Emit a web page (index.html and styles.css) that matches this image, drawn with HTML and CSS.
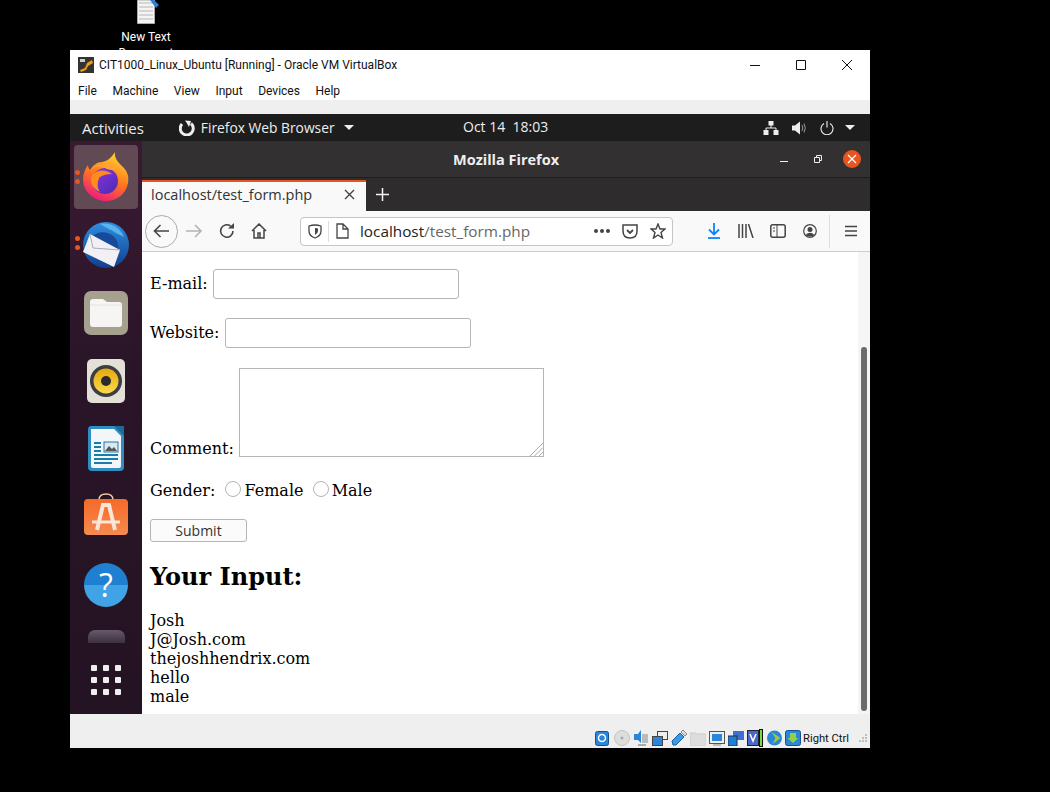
FILE: index.html
```html
<!DOCTYPE html>
<html lang="en">
<head>
  <meta charset="UTF-8">
  <title>CIT1000_Linux_Ubuntu [Running] - Oracle VM VirtualBox</title>
  <link rel="stylesheet" href="styles.css">
</head>
<body>
  <div class="desk-icon">
    <svg width="26" height="25" viewBox="0 0 26 25">
      <path d="M4.5 0H21.5V23.5H4.5Z" fill="#f4f4f4" stroke="#aaa"/>
      <path d="M6 3H20M6 7H20M6 11H20M6 15H20M6 19H20" stroke="#b5b5b5"/>
      <path d="M17 0H21L26 5L23 8Z" fill="#2a7fd0"/>
    </svg>
    <div class="desk-label">New Text<br>Document</div>
  </div>

  <div class="vbox">
    <div class="vbox-title">
      <svg class="vbox-logo" width="16" height="16" viewBox="0 0 16 16">
        <rect width="16" height="16" fill="#333"/>
        <path d="M2 13L7 11L9 6L14 3L15 6L10 9L8 13L3 15Z" fill="#f09a1a"/>
        <rect x="2" y="2" width="5" height="3" fill="#ccc"/>
      </svg>
      <span class="vbox-name">CIT1000_Linux_Ubuntu [Running] - Oracle VM VirtualBox</span>
      <div class="win-btns">
        <svg width="12" height="12" viewBox="0 0 12 12"><path d="M1 6.5H11" stroke="#111"/></svg>
        <svg width="12" height="12" viewBox="0 0 12 12"><path d="M1.5 1.5H10.5V10.5H1.5Z" fill="none" stroke="#111"/></svg>
        <svg width="12" height="12" viewBox="0 0 12 12"><path d="M1 1L11 11M11 1L1 11" stroke="#111"/></svg>
      </div>
    </div>
    <div class="vbox-menu">
      <span>File</span><span>Machine</span><span>View</span><span>Input</span><span>Devices</span><span>Help</span>
    </div>
    <div class="vbox-gap"></div>

    <div class="guest">
      <div class="topbar">
        <span class="activities">Activities</span>
        <div class="app-menu">
          <svg width="16" height="16" viewBox="0 0 16 16"><path d="M3 4A6.5 6.5 0 1 0 12 3.5" fill="none" stroke="#eee" stroke-width="3"/><path d="M6 0.5L12 1L10 7Q8 3 6 0.5Z" fill="#eee"/></svg>
          <span>Firefox Web Browser</span>
          <i class="caret"></i>
        </div>
        <span class="clock">Oct 14&nbsp; 18:03</span>
        <div class="tray">
          <svg width="16" height="14" viewBox="0 0 16 14"><path d="M5.5 0H10.5V4.5H5.5ZM0.5 9H5.5V14H0.5ZM10.5 9H15.5V14H10.5Z" fill="#eee"/><path d="M8 4V7M3 10V7H13V10" fill="none" stroke="#eee"/></svg>
          <svg width="15" height="14" viewBox="0 0 15 14"><path d="M0 4.5H3L8 0.5V13.5L3 9.5H0Z" fill="#eee"/><path d="M10 4Q11.5 7 10 10M12 2.5Q14.5 7 12 11.5" fill="none" stroke="#999"/></svg>
          <svg width="14" height="14" viewBox="0 0 14 14"><path d="M4 2.5A6 6 0 1 0 10 2.5M7 0V6.5" fill="none" stroke="#eee" stroke-width="1.1"/></svg>
          <i class="caret"></i>
        </div>
      </div>

      <div class="guest-main">
        <div class="dock">
          <div class="dock-item active">
            <i class="pip one"></i><i class="pip two"></i>
            <svg width="48" height="50" viewBox="0 0 48 50">
              <defs>
                <linearGradient id="fx" x1="0.7" y1="0" x2="0.3" y2="1"><stop offset="0" stop-color="#ffd535"/><stop offset="0.5" stop-color="#ff7a1c"/><stop offset="1" stop-color="#f0177f"/></linearGradient>
                <linearGradient id="fxp" x1="0" y1="0" x2="1" y2="1"><stop offset="0" stop-color="#8f35e0"/><stop offset="1" stop-color="#4a2bb0"/></linearGradient>
              </defs>
              <path d="M33 0C32 6 36 10 41 15C46 20 47 25 46 31C44 42 35 49 24 49C11 49 1 39 1 27C1 22 3 17 6 13C6 15 7 17 8 18C11 13 15 10 20 10C26 9 30 5 33 0Z" fill="url(#fx)"/>
              <circle cx="23" cy="29" r="13" fill="url(#fxp)"/>
              <path d="M8 18C12 14 18 13 23 16C28 19 33 17 35 18C32 14 27 11 21 12C15 13 11 14 8 18Z" fill="#ffa42c"/>
              <path d="M9 25C14 17 24 17 30 22C25 22 21 23 18 25C16 27 14 35 18 40C11 37 8 31 9 25Z" fill="#ff8a1e"/>
            </svg>
          </div>
          <div class="dock-item">
            <i class="pip one"></i><i class="pip two"></i>
            <svg width="48" height="48" viewBox="0 0 48 48">
              <defs><linearGradient id="tb" x1="0.5" y1="0" x2="0.5" y2="1"><stop offset="0" stop-color="#2e8fe0"/><stop offset="1" stop-color="#123e8c"/></linearGradient></defs>
              <circle cx="24" cy="24" r="23" fill="url(#tb)"/>
              <path d="M6 22C10 12 20 8 30 14C36 18 38 26 34 34L10 28Z" fill="#174a98"/>
              <path d="M8 13L38 29L32 46L1 31Z" fill="#f1f1f5"/>
              <path d="M8 13L11 27L38 29" fill="none" stroke="#aab" stroke-width="1"/>
              <path d="M18 3C26 1 38 5 42 16L34 12C28 8 22 6 18 3Z" fill="#58b3ee"/>
            </svg>
          </div>
          <div class="dock-item">
            <svg width="44" height="44" viewBox="0 0 44 44">
              <rect width="44" height="44" rx="7" fill="#a6a08e"/>
              <path d="M6 11Q6 8 9 8H19L23 11H35Q38 11 38 14V33Q38 36 35 36H9Q6 36 6 33Z" fill="#f6f5f3"/>
              <path d="M6 14H38" stroke="#e4e2de"/>
            </svg>
          </div>
          <div class="dock-item">
            <svg width="38" height="44" viewBox="0 0 38 44">
              <defs><linearGradient id="rb" x1="0" y1="0" x2="0" y2="1"><stop offset="0" stop-color="#e5a90d"/><stop offset="1" stop-color="#f8da4e"/></linearGradient></defs>
              <rect width="38" height="44" rx="5" fill="#e3e0d8"/>
              <circle cx="19" cy="22" r="16" fill="#3d3d42"/>
              <circle cx="19" cy="22" r="12.5" fill="url(#rb)"/>
              <circle cx="19" cy="22" r="5" fill="#2b2b2b"/>
            </svg>
          </div>
          <div class="dock-item">
            <svg width="38" height="46" viewBox="0 0 38 46">
              <path d="M4 0H28L37 9V41Q37 45 33 45H5Q1 45 1 41V4Q1 0 4 0Z" fill="#2f8dbf"/>
              <path d="M4 3H27L34 10V40Q34 42 32 42H6Q4 42 4 40Z" fill="#f3f6f8"/>
              <path d="M27 0L37 0V10Z" fill="#1b6d98"/>
              <path d="M7 17H14M7 21H14M7 25H14M7 29H31M7 33H31M7 37H25" stroke="#1a7bad" stroke-width="2"/>
              <rect x="17" y="16" width="14" height="10" fill="#dfe7ee" stroke="#1a7bad"/>
              <path d="M18 25L22 20L25 23L27 21L30 25Z" fill="#555"/>
            </svg>
          </div>
          <div class="dock-item">
            <svg class="bag" width="44" height="42" viewBox="0 0 44 42">
              <defs><linearGradient id="sw" x1="0" y1="0" x2="0" y2="1"><stop offset="0" stop-color="#f56a28"/><stop offset="1" stop-color="#f58a50"/></linearGradient></defs>
              <path d="M15 7Q15 1 22 1Q29 1 29 7" fill="none" stroke="#f1c9a8" stroke-width="1.5"/>
              <rect y="6" width="44" height="36" rx="4" fill="url(#sw)"/>
              <path d="M13 37L19 12H25L31 37" fill="none" stroke="#fbe5d8" stroke-width="4"/>
              <path d="M8 29H36" stroke="#fbe5d8" stroke-width="3"/>
            </svg>
          </div>
          <div class="dock-item">
            <div class="help-ball">?</div>
          </div>
          <div class="dock-clip"></div>
          <div class="dock-grid">
            <i></i><i></i><i></i><i></i><i></i><i></i><i></i><i></i><i></i>
          </div>
        </div>

        <div class="firefox">
          <div class="fx-title">
            <b>Mozilla Firefox</b>
            <div class="fx-btns">
              <svg width="10" height="10" viewBox="0 0 10 10"><path d="M1 7.5H9" stroke="#eee"/></svg>
              <svg width="10" height="10" viewBox="0 0 10 10"><path d="M1.5 3.5H6.5V8.5H1.5ZM3.5 3V1.5H8.5V6.5H7" fill="none" stroke="#eee"/></svg>
              <span class="fx-close"><svg width="10" height="10" viewBox="0 0 10 10"><path d="M1 1L9 9M9 1L1 9" stroke="#fff" stroke-width="1.3"/></svg></span>
            </div>
          </div>
          <div class="fx-tabs">
            <div class="tab">
              <span>localhost/test_form.php</span>
              <svg width="11" height="11" viewBox="0 0 11 11"><path d="M1 1L10 10M10 1L1 10" stroke="#444" stroke-width="1.4"/></svg>
            </div>
            <svg class="new-tab" width="13" height="13" viewBox="0 0 13 13"><path d="M6.5 0V13M0 6.5H13" stroke="#f4f4f4" stroke-width="1.5"/></svg>
          </div>
          <div class="fx-nav">
            <span class="back"><svg width="17" height="16" viewBox="0 0 17 16"><path d="M7.500 2L1.500 8L7.500 14M1.500 8H16" fill="none" stroke="#444" stroke-width="1.6"/></svg></span>
            <svg class="forward" width="18" height="16" viewBox="0 0 18 16"><path d="M10 2L16 8L10 14M16 8H1" fill="none" stroke="#b4b4b4" stroke-width="1.6"/></svg>
            <svg class="reload" width="16" height="16" viewBox="0 0 16 16"><path d="M14 8A6.2 6.2 0 1 1 11.5 3" fill="none" stroke="#444" stroke-width="1.6"/><path d="M9 5.5H15V0Z" fill="#444"/></svg>
            <svg class="home" width="16" height="16" viewBox="0 0 16 16"><path d="M1 8L8 1L15 8M3 7V15H13V7M7 15V10H9V15" fill="none" stroke="#444" stroke-width="1.5"/></svg>
            <div class="urlbar">
              <svg width="14" height="15" viewBox="0 0 14 15"><path d="M1 2Q7 0 13 2V7Q13 12 7 14Q1 12 1 7Z" fill="none" stroke="#444" stroke-width="1.3"/><path d="M7 4Q9 4 10 4.5V7Q10 9 7 11Z" fill="#444"/></svg>
              <i class="url-sep"></i>
              <svg width="14" height="16" viewBox="0 0 14 16"><path d="M2 1H8L13 6V15H2ZM8 1V6H13" fill="none" stroke="#444" stroke-width="1.3"/></svg>
              <span class="url-text"><em>localhost</em>/test_form.php</span>
              <span class="url-dots"><i></i><i></i><i></i></span>
              <svg class="pocket" width="16" height="15" viewBox="0 0 16 15"><path d="M1 1H15V7Q15 14 8 14Q1 14 1 7Z" fill="none" stroke="#444" stroke-width="1.5"/><path d="M5 6L8 9L11 6" fill="none" stroke="#444" stroke-width="1.8"/></svg>
              <svg width="16" height="16" viewBox="0 0 16 16"><path d="M8 1L10 6H15L11 9.5L12.5 15L8 12L3.5 15L5 9.5L1 6H6Z" fill="none" stroke="#444" stroke-width="1.4"/></svg>
            </div>
            <div class="nav-right">
              <svg width="14" height="16" viewBox="0 0 14 16"><path d="M7 0V11M2 6.5L7 11.5L12 6.5" fill="none" stroke="#0a84ff" stroke-width="1.8"/><path d="M1 15H13" stroke="#0a84ff" stroke-width="1.8"/></svg>
              <svg width="16" height="14" viewBox="0 0 16 14"><path d="M1 0V14M4.5 0V14M8 0V14M10.5 0L15 14" fill="none" stroke="#444" stroke-width="1.5"/></svg>
              <svg width="16" height="14" viewBox="0 0 16 14"><rect x="0.8" y="0.8" width="14.4" height="12.4" rx="2" fill="none" stroke="#444" stroke-width="1.5"/><path d="M7 1V13M3 4H5M3 7H5" stroke="#444"/></svg>
              <svg width="14" height="14" viewBox="0 0 14 14"><circle cx="7" cy="7" r="6.3" fill="none" stroke="#444" stroke-width="1.2"/><circle cx="7" cy="5.5" r="2.5" fill="#444"/><path d="M2.5 11Q7 6.5 11.5 11Q7 14 2.5 11Z" fill="#444"/></svg>
              <i class="nav-sep"></i>
              <svg width="12" height="12" viewBox="0 0 12 12"><path d="M0 1.5H12M0 6H12M0 10.5H12" stroke="#444" stroke-width="1.5"/></svg>
            </div>
          </div>

          <div class="page">
            <div class="page-body">
              <form class="test-form">
                <div class="row">E-mail: <span class="field"></span></div>
                <div class="row">Website: <span class="field"></span></div>
                <div class="row comment">Comment: <span class="textarea">
                  <svg class="resizer" width="13" height="13" viewBox="0 0 13 13"><path d="M13 0L0 13M13 4.500L4.500 13M13 9L9 13" stroke="#aaa" fill="none"/></svg>
                </span></div>
                <div class="row gender">Gender: <span class="radio"></span> Female <span class="radio"></span> Male</div>
                <div class="submit">Submit</div>
              </form>
              <h2>Your Input:</h2>
              <div class="output">Josh<br>J@Josh.com<br>thejoshhendrix.com<br>hello<br>male</div>
            </div>
            <div class="scrolltrack"><div class="scrollthumb"></div></div>
          </div>
        </div>
      </div>
    </div>

    <div class="vbox-status">
      <svg class="first" width="14" height="15" viewBox="0 0 14 15"><rect x="0.5" y="0.5" width="13" height="14" rx="2" fill="#2a86d8" stroke="#15508f"/><circle cx="7" cy="7" r="3.5" fill="none" stroke="#fff" stroke-width="1.5"/></svg>
      <svg width="16" height="16" viewBox="0 0 16 16"><circle cx="8" cy="8" r="7.5" fill="#ddd" stroke="#c4c4c4"/><circle cx="8" cy="8" r="1.5" fill="#aaa"/></svg>
      <svg width="16" height="16" viewBox="0 0 16 16"><path d="M1 4H5L8 0V13L5 10H1Z" fill="#2a86d8"/><path d="M9 4H15V13H9Z" fill="#bbb"/><path d="M5 14H13V16H5Z" fill="#aaa"/></svg>
      <svg width="16" height="15" viewBox="0 0 16 15"><rect x="5.5" y="0.5" width="10" height="8" fill="#eee" stroke="#444"/><rect x="0.5" y="5.5" width="10" height="9" fill="#2a86d8" stroke="#444"/></svg>
      <svg width="16" height="16" viewBox="0 0 16 16"><path d="M1 11L9 3L13 7L5 15H2Z" fill="#3a9ae8" stroke="#1c5f9e"/><path d="M10 2L12 0L16 4L14 6Z" fill="#ddd" stroke="#888"/></svg>
      <svg width="16" height="15" viewBox="0 0 16 15"><path d="M0 2H6L7 3H16V15H0Z" fill="#ddd" stroke="#ccc"/></svg>
      <svg width="16" height="15" viewBox="0 0 16 15"><rect x="0.5" y="0.5" width="15" height="12" fill="#eee" stroke="#555"/><rect x="3" y="3" width="10" height="7" fill="#2a86d8"/><path d="M4 14H12" stroke="#888"/></svg>
      <svg width="16" height="15" viewBox="0 0 16 15"><rect x="5" y="0" width="11" height="9" fill="#3f6fd0"/><rect x="0" y="5" width="9" height="10" fill="#1f7ed6" stroke="#234"/></svg>
      <svg class="tight" width="12" height="16" viewBox="0 0 12 16"><rect x="0.5" y="0.5" width="11" height="15" fill="#4a66c8" stroke="#223"/><path d="M3 4L6 11L9 4" fill="none" stroke="#fff" stroke-width="1.5"/></svg>
      <i class="vm-led"></i>
      <svg class="snug" width="17" height="16" viewBox="0 0 16 16"><circle cx="8" cy="8" r="7.5" fill="#2a86d8"/><path d="M5 2L14 8L6 14L9 8Z" fill="#9ccc3a"/></svg>
      <svg class="snug" width="16" height="16" viewBox="0 0 16 16"><rect x="0.5" y="0.5" width="15" height="15" rx="2" fill="#2a86d8" stroke="#15508f"/><path d="M5 3H11V8H13.5L8 13L2.5 8H5Z" fill="#8fd14a"/></svg>
      <span class="host-key">Right Ctrl</span>
      <svg class="grip" width="10" height="10" viewBox="0 0 10 10"><path d="M7 1H9V3H7ZM4 4H6V6H4ZM7 4H9V6H7ZM1 7H3V9H1ZM4 7H6V9H4ZM7 7H9V9H7Z" fill="#c0c0c0"/></svg>
    </div>
  </div>
</body>
</html>
```

FILE: styles.css
```css
html, body {
  margin: 0;
  padding: 0;
  background: #000;
  height: 792px;
  overflow: hidden;
}
i, em {
  display: block;
  font-style: normal;
}

/* desktop behind the vm window */
.desk-icon {
  position: absolute;
  left: 106px;
  top: 0;
  width: 80px;
  height: 50px;
  overflow: hidden;
  text-align: center;
  color: #fff;
  font: 12px Roboto, sans-serif;
}
.desk-icon svg {
  display: block;
  margin: 0 auto;
}
.desk-label {
  margin-top: 4px;
  line-height: 16px;
}

/* virtualbox window */
.vbox {
  position: absolute;
  left: 70px;
  top: 50px;
  width: 800px;
  height: 698px;
  display: flex;
  flex-direction: column;
  background: #f0f0f0;
  font-family: Roboto, sans-serif;
}
.vbox-title {
  height: 30px;
  background: #fff;
  display: flex;
  align-items: center;
  padding-left: 8px;
  font-size: 12px;
  color: #111;
}
.vbox-logo {
  margin-right: 5px;
}
.win-btns {
  margin-left: auto;
  display: flex;
  gap: 34px;
  padding-right: 17px;
}
.vbox-menu {
  height: 20px;
  background: #fff;
  display: flex;
  gap: 15.6px;
  padding-left: 8px;
  font-size: 12px;
  line-height: 22px;
  color: #111;
}
.vbox-gap {
  height: 14px;
  background: #efefef;
}

/* ubuntu guest */
.guest {
  height: 600px;
  display: flex;
  flex-direction: column;
  font-family: "Open Sans", sans-serif;
}
.topbar {
  height: 27px;
  flex: none;
  background: #1d1d1d;
  color: #eee;
  display: flex;
  align-items: center;
  font-size: 14px;
  position: relative;
}
.activities {
  margin-left: 12px;
  font-size: 15px;
}
.app-menu {
  margin-left: 35px;
  display: flex;
  align-items: center;
  gap: 6px;
  font-size: 13.8px;
}
.app-menu .caret {
  margin-left: 3px;
}
.clock {
  position: absolute;
  left: 393px;
  top: 3px;
}
.tray {
  margin-left: auto;
  display: flex;
  align-items: center;
  gap: 13px;
  padding-right: 15px;
}
.tray .caret {
  margin-left: -2px;
}
.caret {
  width: 0;
  height: 0;
  border-left: 5px solid transparent;
  border-right: 5px solid transparent;
  border-top: 5px solid #eee;
}
.guest-main {
  flex: 1;
  display: flex;
  min-height: 0;
}

/* dock */
.dock {
  width: 72px;
  flex: none;
  background: linear-gradient(#3a1a33, #2a1528 40%, #241322);
  display: flex;
  flex-direction: column;
  align-items: center;
  overflow: hidden;
}
.dock-item {
  height: 68px;
  width: 64px;
  flex: none;
  display: flex;
  align-items: center;
  justify-content: center;
  position: relative;
  border-radius: 4px;
}
.dock-item.active {
  margin: 4px 0 2px;
  height: 64px;
  background: #624a55;
}
.bag {
  margin-bottom: 6px;
}
.pip {
  position: absolute;
  left: 1px;
  width: 5px;
  height: 5px;
  border-radius: 50%;
  background: #e9541f;
}
.pip.one {
  top: 25px;
}
.pip.two {
  top: 34px;
}
.help-ball {
  width: 44px;
  height: 44px;
  border-radius: 50%;
  background: linear-gradient(#1f7fd0 50%, #3fa3e6 50%);
  color: #fff;
  font: 32px/44px "Open Sans", sans-serif;
  text-align: center;
}
.dock-clip {
  flex: none;
  width: 37px;
  height: 13px;
  margin-top: 11px;
  border-radius: 7px 7px 0 0;
  background: linear-gradient(#67596a, #3c3040);
}
.dock-grid {
  display: grid;
  grid-template-columns: repeat(3, 6px);
  gap: 6px;
  margin-top: 22px;
}
.dock-grid i {
  height: 6px;
  width: 6px;
  border-radius: 1px;
  background: #eee;
}

/* firefox */
.firefox {
  flex: 1;
  min-width: 0;
  display: flex;
  flex-direction: column;
}
.fx-title {
  height: 37px;
  flex: none;
  box-sizing: border-box;
  padding-top: 1px;
  background: #333032;
  border-bottom: 1px solid #1f1d1e;
  color: #eee;
  font-size: 14.5px;
  display: flex;
  align-items: center;
  justify-content: center;
  position: relative;
}
.fx-btns {
  position: absolute;
  right: 9px;
  top: 9px;
  display: flex;
  align-items: center;
  gap: 24px;
}
.fx-close {
  width: 18px;
  height: 18px;
  margin-left: -4px;
  border-radius: 50%;
  background: #e95420;
  display: flex;
  align-items: center;
  justify-content: center;
}
.fx-tabs {
  height: 33px;
  flex: none;
  background: #2f2c2e;
  display: flex;
  align-items: center;
}
.tab {
  width: 224px;
  height: 31px;
  margin-top: 2px;
  padding: 0 11px 5px 9px;
  box-sizing: border-box;
  background: #f9f9fa;
  border-top: 2px solid #e95420;
  display: flex;
  align-items: center;
  justify-content: space-between;
  color: #333;
  font-size: 14.5px;
}
.new-tab {
  margin-left: 10px;
}
.fx-nav {
  height: 41px;
  flex: none;
  box-sizing: border-box;
  background: #f9f9fa;
  border-bottom: 1px solid #ccc;
  display: flex;
  align-items: center;
  padding-left: 3px;
}
.back {
  width: 33px;
  height: 33px;
  box-sizing: border-box;
  border: 1px solid #aaa;
  border-radius: 50%;
  display: flex;
  align-items: center;
  justify-content: center;
}
.forward {
  margin-left: 7px;
}
.reload {
  margin-left: 16px;
}
.home {
  margin-left: 16px;
}
.urlbar {
  width: 373px;
  height: 29px;
  margin-left: 33px;
  box-sizing: border-box;
  border: 1px solid #c5c5c5;
  border-radius: 4px;
  background: #fff;
  display: flex;
  align-items: center;
  padding: 0 6px 0 7px;
  gap: 6px;
}
.url-sep {
  width: 1px;
  height: 21px;
  background: #ddd;
}
.url-text {
  margin-left: 5px;
  font-size: 15.3px;
  color: #666;
  flex: 1;
}
.url-text em {
  display: inline;
  color: #222;
}
.url-dots {
  display: flex;
  gap: 2px;
  margin-right: 6px;
}
.url-dots i {
  width: 4px;
  height: 4px;
  border-radius: 50%;
  background: #444;
}
.pocket {
  margin-right: 6px;
}
.nav-right {
  margin-left: 34px;
  display: flex;
  align-items: center;
  gap: 17px;
}
.nav-right svg:nth-child(2) {
  margin-right: -1px;
}
.nav-sep {
  width: 1px;
  height: 33px;
  background: #ddd;
  margin: 0 -2px 0 -5px;
}

/* page content */
.page {
  flex: 1;
  min-height: 0;
  display: flex;
  background: #fff;
  color: #000;
  font: 16px "DejaVu Serif", serif;
}
.page-body {
  flex: 1;
  padding: 16px 0 0 8px;
}
.row {
  display: flex;
  align-items: center;
  white-space: pre;
  height: 30px;
  margin-bottom: 19px;
}
.field {
  width: 246px;
  height: 30px;
  margin-top: 2px;
  box-sizing: border-box;
  border: 1px solid #b5b5b5;
  border-radius: 3px;
  background: #fff;
}
.row.comment {
  height: 90px;
  margin-top: 21px;
  align-items: flex-end;
  margin-bottom: 16px;
}
.textarea {
  width: 305px;
  height: 89px;
  margin-bottom: 1px;
  box-sizing: border-box;
  border: 1px solid #b5b5b5;
  position: relative;
}
.resizer {
  position: absolute;
  right: 0;
  bottom: 0;
}
.row.gender {
  height: 32px;
  margin-bottom: 13px;
}
.radio {
  width: 16px;
  height: 16px;
  box-sizing: border-box;
  border: 1px solid #b5b5b5;
  border-radius: 50%;
  margin: -3px -2px 0 5px;
}
.radio + .radio {
  margin-left: 4px;
}
.submit {
  width: 97px;
  height: 23px;
  box-sizing: border-box;
  border: 1px solid #b5b5b5;
  border-radius: 3px;
  background: #fbfbfb;
  color: #333;
  font: 14px/21px "Open Sans", sans-serif;
  text-align: center;
}
h2 {
  margin: 21px 0 20px;
  font-size: 24px;
  line-height: 28px;
}
.output {
  line-height: 19px;
}
.scrolltrack {
  width: 12px;
  flex: none;
  background: #f5f5f5;
  padding: 95px 0 3px;
  box-sizing: border-box;
  display: flex;
  justify-content: center;
}
.scrollthumb {
  width: 6px;
  border-radius: 3px;
  background: #6b6b6b;
}

/* vbox status bar */
.vbox-status {
  flex: 1;
  display: flex;
  align-items: center;
  justify-content: flex-end;
  gap: 3px;
  padding: 14px 2px 0 0;
  box-sizing: border-box;
  background: #efefef;
  font-size: 11.2px;
  color: #111;
}
.first {
  margin-right: 2px;
}
.tight {
  margin-right: -3px;
}
.snug {
  margin-right: -1px;
}
.vm-led {
  width: 2px;
  height: 16px;
  background: #6fe04a;
  border: 1px solid #111;
}
.host-key {
  margin-right: 6px;
}
```
